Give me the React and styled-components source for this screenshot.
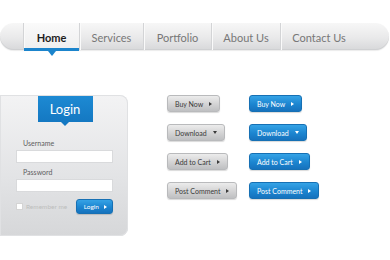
import React from 'react';
import styled, { createGlobalStyle } from 'styled-components';

const Global = createGlobalStyle`
  body {
    margin: 0;
    background: #ffffff;
    font-family: Lato, "Open Sans", sans-serif;
  }
`;

const Page = styled.div`
  width: 390px;
  height: 260px;
  padding-top: 23px;
  box-sizing: border-box;
  overflow: hidden;
`;

const Nav = styled.nav`
  width: 389px;
  height: 27px;
  display: flex;
  border-radius: 14px;
  background: linear-gradient(#f7f7f7, #e9e9ea 55%, #d7d8da);
  box-shadow: inset 0 -1px 0 #cfd0d2, 0 1px 1px rgba(0, 0, 0, 0.08);
`;

const Cap = styled.div`
  width: ${(p) => p.$w}px;
  flex: ${(p) => (p.$grow ? 1 : 'none')};
`;

const Tab = styled.a`
  position: relative;
  width: ${(p) => p.$w}px;
  display: flex;
  align-items: center;
  justify-content: center;
  font-size: 11px;
  color: ${(p) => (p.$active ? '#1d1d1d' : '#777777')};
  font-weight: ${(p) => (p.$active ? 700 : 400)};
  border-left: 1px solid #d3d4d6;
  box-shadow: inset 1px 0 0 #fafafa;
  background: ${(p) => (p.$active ? 'linear-gradient(#fafafa, #eeeeef)' : 'transparent')};
  padding-top: 1px;
  box-sizing: border-box;

  &:last-child {
    border-right: 1px solid #d3d4d6;
  }

  ${(p) =>
    p.$active &&
    `
    &::after {
      content: '';
      position: absolute;
      left: 0;
      right: 0;
      bottom: -1px;
      height: 3px;
      background: #1b84cc;
    }
    &::before {
      content: '';
      position: absolute;
      left: 50%;
      bottom: -6px;
      margin-left: -4px;
      border-left: 4px solid transparent;
      border-right: 4px solid transparent;
      border-top: 5px solid #1b84cc;
    }
  `}
`;

const Body = styled.div`
  display: flex;
  margin-top: 45px;
`;

const Panel = styled.div`
  width: 128px;
  height: 141px;
  box-sizing: border-box;
  border-radius: 0 8px 8px 0;
  background: linear-gradient(#f3f3f4, #e2e3e5 60%, #d6d7d9);
  box-shadow: inset 0 0 0 1px #e0e1e3;
  padding: 1px 15px 0 16px;
  display: flex;
  flex-direction: column;
`;

const Header = styled.div`
  position: relative;
  align-self: center;
  width: 55px;
  height: 26px;
  margin-left: 1px;
  background: linear-gradient(#1d8ad3, #1478c2);
  color: #fff;
  font-size: 13px;
  display: flex;
  align-items: center;
  justify-content: center;

  &::after {
    content: '';
    position: absolute;
    left: 50%;
    bottom: -4px;
    margin-left: -4px;
    border-left: 4px solid transparent;
    border-right: 4px solid transparent;
    border-top: 4px solid #1478c2;
  }
`;

const Label = styled.label`
  font-size: 7px;
  color: #5e5e5e;
  margin: ${(p) => p.$top}px 0 3px 7px;
  line-height: 8px;
`;

const Input = styled.div`
  height: 13px;
  background: #fff;
  border: 1px solid #d9dadc;
  box-sizing: border-box;
`;

const Foot = styled.div`
  display: flex;
  align-items: center;
  justify-content: space-between;
  margin-top: 7px;
`;

const Remember = styled.span`
  display: flex;
  align-items: center;
  gap: 3px;
  font-size: 6.5px;
  color: #bdbdbd;
  white-space: nowrap;
`;

const Check = styled.span`
  width: 5px;
  height: 5px;
  background: #fff;
  border: 1px solid #d4d4d4;
`;

const Buttons = styled.div`
  display: grid;
  grid-template-columns: 82px auto;
  row-gap: 12px;
  margin-left: 39px;
  align-content: start;
  justify-items: start;
  grid-auto-rows: 17px;
`;

const Btn = styled.button`
  height: ${(p) => p.$h || 17}px;
  display: inline-flex;
  align-items: center;
  gap: ${(p) => p.$gap || 6}px;
  padding: ${(p) => p.$pad || '0 7px'};
  border-radius: 3px;
  font-family: Lato, "Open Sans", sans-serif;
  font-size: ${(p) => p.$fs || 7}px;
  white-space: nowrap;
  cursor: pointer;
  border: 1px solid ${(p) => (p.$blue ? '#1670b4' : '#b9babc')};
  color: ${(p) => (p.$blue ? '#ffffff' : '#3a3a3a')};
  background: ${(p) =>
    p.$blue
      ? 'linear-gradient(#35a3e6, #1c85d0 55%, #1672bd)'
      : 'linear-gradient(#ececec, #d3d3d4 55%, #bfc0c2)'};
  box-shadow: 0 1px 1px rgba(0, 0, 0, 0.15);
`;

const Arrow = styled.span`
  width: 0;
  height: 0;
  ${(p) =>
    p.$down
      ? `border-left: 2.5px solid transparent; border-right: 2.5px solid transparent; border-top: 3px solid currentColor;`
      : `border-top: 2.5px solid transparent; border-bottom: 2.5px solid transparent; border-left: 3px solid currentColor;`}
`;

const tabs = [
  { label: 'Home', w: 56, active: true },
  { label: 'Services', w: 64 },
  { label: 'Portfolio', w: 68 },
  { label: 'About Us', w: 69 },
  { label: 'Contact Us', w: 77 },
];

const actions = [
  { label: 'Buy Now' },
  { label: 'Download', down: true },
  { label: 'Add to Cart' },
  { label: 'Post Comment' },
];

export default function App() {
  return (
    <Page>
      <Global />
      <Nav>
        <Cap $w={23} />
        {tabs.map((t) => (
          <Tab key={t.label} $w={t.w} $active={t.active}>
            {t.label}
          </Tab>
        ))}
        <Cap $grow />
      </Nav>
      <Body>
        <Panel>
          <Header>Login</Header>
          <Label $top={17}>Username</Label>
          <Input />
          <Label $top={5}>Password</Label>
          <Input />
          <Foot>
            <Remember>
              <Check />
              Remember me
            </Remember>
            <Btn $blue $h={15} $gap={5} $pad="0 5px 0 7px" $fs={6.5}>
              Login <Arrow />
            </Btn>
          </Foot>
        </Panel>
        <Buttons>
          {actions.map((a) => (
            <React.Fragment key={a.label}>
              <Btn>
                {a.label} <Arrow $down={a.down} />
              </Btn>
              <Btn $blue>
                {a.label} <Arrow $down={a.down} />
              </Btn>
            </React.Fragment>
          ))}
        </Buttons>
      </Body>
    </Page>
  );
}
